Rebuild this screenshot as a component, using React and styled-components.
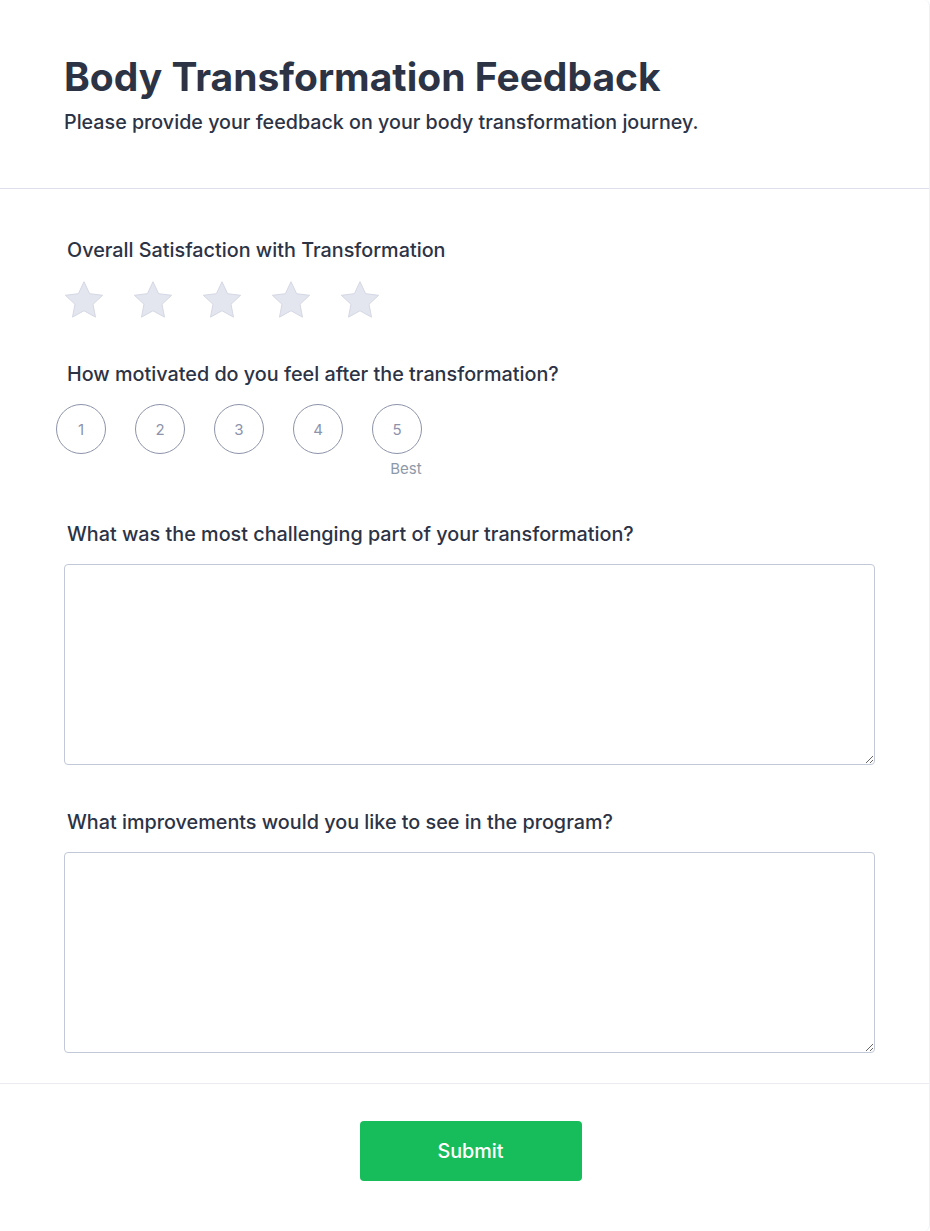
import React from "react";
import styled, { createGlobalStyle } from "styled-components";

const Global = createGlobalStyle`
  html, body { margin: 0; padding: 0; background: #ffffff; }
  body { font-family: Inter, "Noto Sans", sans-serif; color: #2c3345; }
  * { box-sizing: border-box; }
`;

const Card = styled.div`
  width: 930px;
  min-height: 1231px;
  background: #fff;
  border-right: 1px solid #eef0f4;
  border-radius: 0 6px 6px 0;
  display: flex;
  flex-direction: column;
`;

const Header = styled.header`
  padding: 53px 64px 52px;
  border-bottom: 1px solid #dedfec;
`;

const Title = styled.h1`
  margin: 0;
  font-size: 39px;
  line-height: 48px;
  font-weight: 700;
  color: #2c3345;
`;

const Subtitle = styled.p`
  margin: 8px 0 0;
  font-size: 19.7px;
  line-height: 27px;
  font-weight: 500;
  color: #2c3345;
`;

const Body = styled.main`
  padding: 48px 55px 30px 64px;
  display: flex;
  flex-direction: column;
`;

const Field = styled.section`
  margin-bottom: ${(p) => p.$mb}px;
`;

const Label = styled.label`
  display: block;
  padding-left: 3px;
  font-size: 19.8px;
  line-height: 27px;
  font-weight: 500;
  color: #2c3345;
  margin-bottom: 16px;
`;

const Stars = styled.div`
  display: flex;
  gap: 31px;
  padding-left: 1px;
`;

const StarBtn = styled.span`
  width: 38px;
  height: 38px;
  display: inline-flex;
`;

const Scale = styled.div`
  display: flex;
  gap: 29px;
  margin-left: -8px;
`;

const Col = styled.div`
  display: flex;
  flex-direction: column;
  align-items: center;
`;

const Circle = styled.span`
  width: 50px;
  height: 50px;
  border: 1px solid #8d93ab;
  border-radius: 50%;
  display: flex;
  align-items: center;
  justify-content: center;
  font-size: 15px;
  color: #8d93ab;
`;

const Hint = styled.span`
  margin-top: 5px;
  margin-left: 18px;
  font-size: 15px;
  line-height: 20px;
  color: #8d99a8;
`;

const Area = styled.textarea`
  display: block;
  width: 811px;
  height: 201px;
  border: 1px solid #c3c8d8;
  border-radius: 4px;
  font-family: inherit;
  font-size: 16px;
  padding: 10px;
  resize: vertical;
  background: #fff;
  outline: none;
`;

const Footer = styled.footer`
  border-top: 1px solid #ebebf1;
  padding: 37px 0 50px;
  display: flex;
  justify-content: center;
`;

const Submit = styled.button`
  width: 222px;
  height: 60px;
  margin-left: 12px;
  border: none;
  border-radius: 4px;
  background: #18bd5b;
  color: #fff;
  font-family: inherit;
  font-size: 19.8px;
  font-weight: 500;
  cursor: pointer;
`;

const Star = () => (
  <StarBtn>
    <svg width="38" height="38" viewBox="2 1.3 20 20">
      <path
        d="M12 2.2l2.95 6.3 6.85.85-5.05 4.7 1.3 6.8L12 17.5l-6.05 3.35 1.3-6.8L2.2 9.35l6.85-.85z"
        fill="#e3e6ef"
        stroke="#d3d6e1"
        strokeWidth="0.5"
        strokeLinejoin="round"
      />
    </svg>
  </StarBtn>
);

export default function App() {
  return (
    <>
      <Global />
      <Card>
        <Header>
          <Title>Body Transformation Feedback</Title>
          <Subtitle>Please provide your feedback on your body transformation journey.</Subtitle>
        </Header>
        <Body>
          <Field $mb={43}>
            <Label>Overall Satisfaction with Transformation</Label>
            <Stars>
              {[1, 2, 3, 4, 5].map((n) => (
                <Star key={n} />
              ))}
            </Stars>
          </Field>
          <Field $mb={42}>
            <Label>How motivated do you feel after the transformation?</Label>
            <Scale>
              {[1, 2, 3, 4, 5].map((n) => (
                <Col key={n}>
                  <Circle>{n}</Circle>
                  {n === 5 && <Hint>Best</Hint>}
                </Col>
              ))}
            </Scale>
          </Field>
          <Field $mb={44}>
            <Label>What was the most challenging part of your transformation?</Label>
            <Area />
          </Field>
          <Field $mb={0}>
            <Label>What improvements would you like to see in the program?</Label>
            <Area />
          </Field>
        </Body>
        <Footer>
          <Submit>Submit</Submit>
        </Footer>
      </Card>
    </>
  );
}
